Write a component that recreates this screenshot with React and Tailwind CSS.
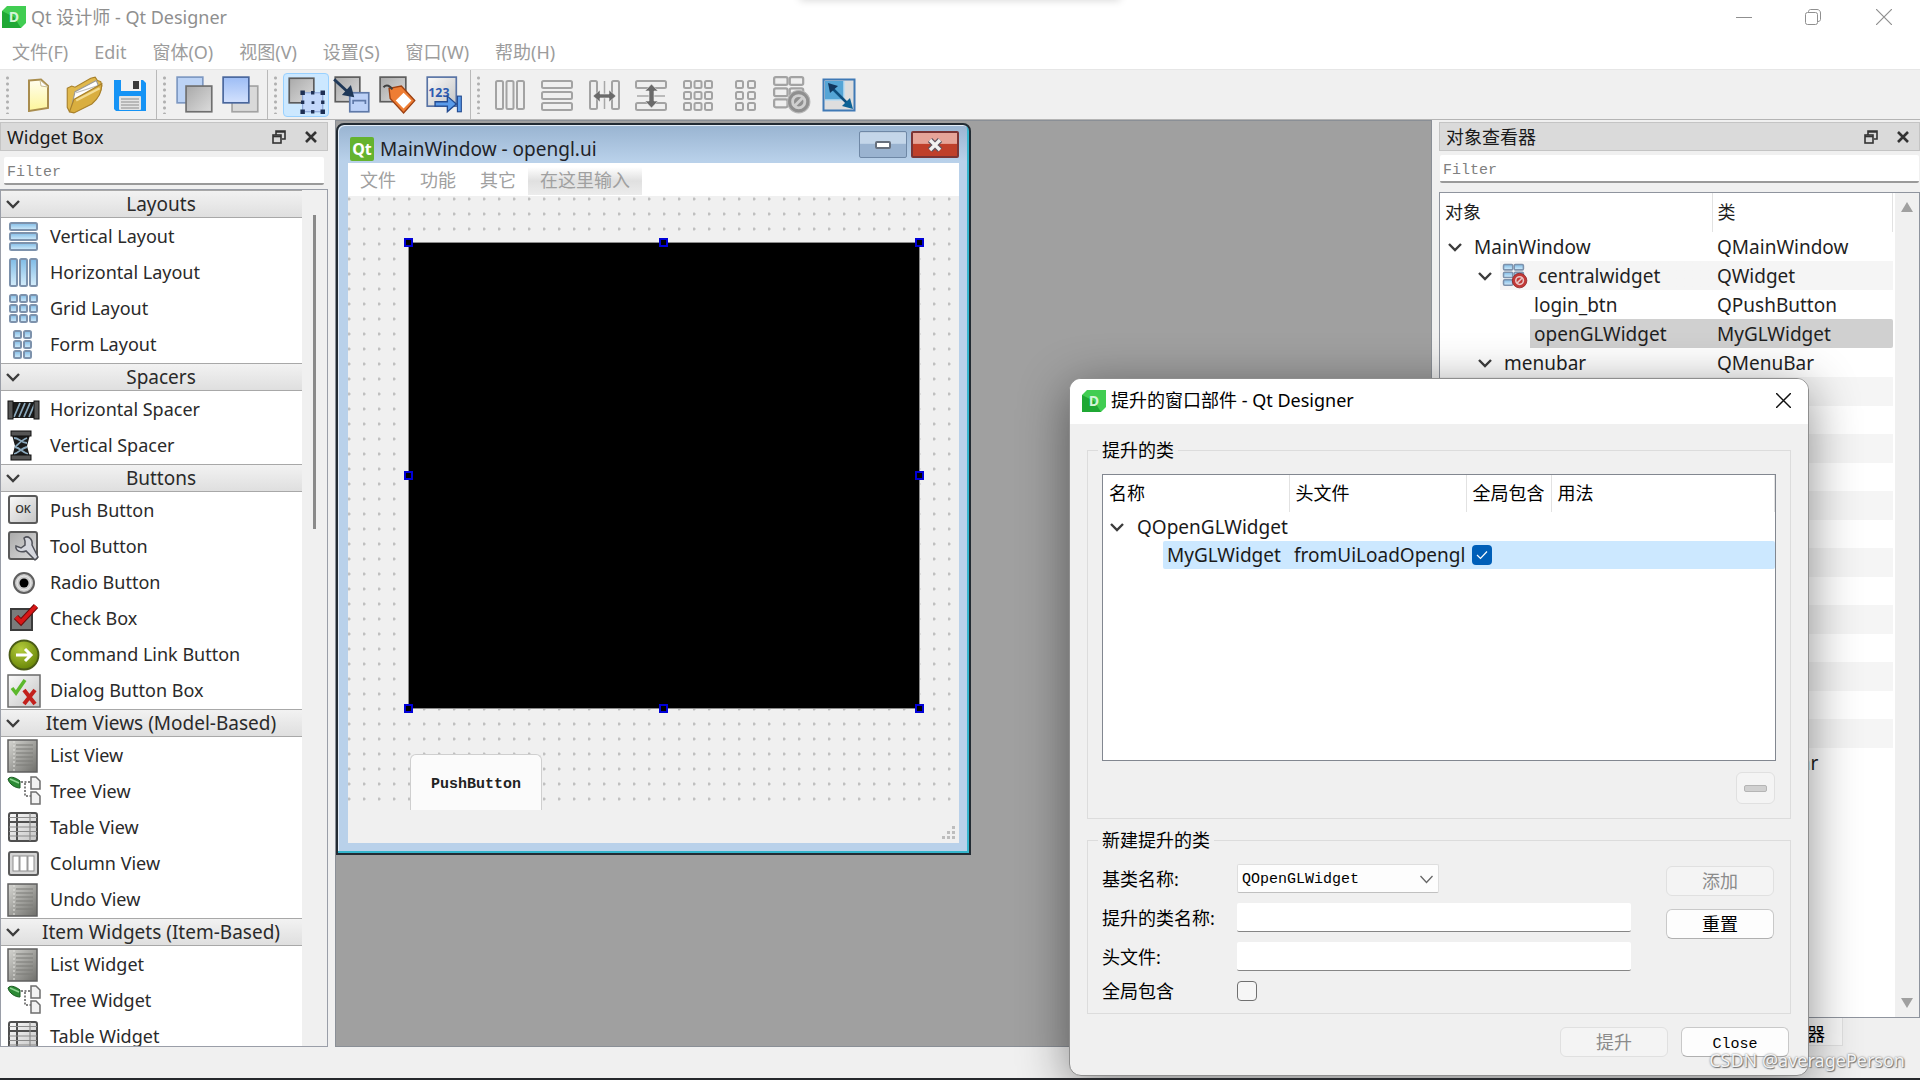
const MONO = "font-['Liberation_Mono','Noto_Sans_CJK_SC',monospace] text-[15px]";

/** Gradients shared by every icon on the page. */
function IconDefs() {
  return (
    <svg className="absolute" width="0" height="0" aria-hidden="true">
      <defs>
        <linearGradient id="gray" x1="0" y1="0" x2="1" y2="1">
          <stop offset="0" stopColor="#a9a9a9" />
          <stop offset="1" stopColor="#dcdcdc" />
        </linearGradient>
        <linearGradient id="light" x1="0" y1="0" x2="1" y2="1">
          <stop offset="0" stopColor="#fafafa" />
          <stop offset="1" stopColor="#c4c4c4" />
        </linearGradient>
        <linearGradient id="list" x1="0" y1="0" x2="1" y2="1">
          <stop offset="0" stopColor="#d6d6d2" />
          <stop offset="1" stopColor="#6e6e6a" />
        </linearGradient>
        <linearGradient id="blue" x1="0" y1="0" x2="0" y2="1">
          <stop offset="0" stopColor="#9dbdf5" />
          <stop offset="1" stopColor="#d3e1fd" />
        </linearGradient>
        <linearGradient id="sky" x1="0" y1="0" x2="0" y2="1">
          <stop offset="0" stopColor="#7fbbe6" />
          <stop offset="1" stopColor="#d5edfb" />
        </linearGradient>
        <linearGradient id="gold" x1="0" y1="0" x2="0" y2="1">
          <stop offset="0" stopColor="#fffef0" />
          <stop offset="1" stopColor="#fdf59a" />
        </linearGradient>
        <radialGradient id="green" cx="0.4" cy="0.3" r="0.8">
          <stop offset="0" stopColor="#b4cc3c" />
          <stop offset="1" stopColor="#5f7d00" />
        </radialGradient>
      </defs>
    </svg>
  );
}

function Icon({ size = 34, children }) {
  return (
    <svg width={size} height={size} viewBox="0 0 34 34" fill="none" aria-hidden="true" className="shrink-0">
      {children}
    </svg>
  );
}

function Cells({ xs, ys, w, h, fill, stroke }) {
  return ys.flatMap((y) =>
    xs.map((x) => (
      <rect key={`${x}-${y}`} x={x} y={y} width={w} height={h} rx="1.5" fill={fill} stroke={stroke} strokeWidth="2" />
    ))
  );
}

const GRAY = { fill: "#efefef", stroke: "#a3a3a3" };
const SKY = { fill: "url(#sky)", stroke: "#7d92ac" };

const toolIcons = {
  new: (
    <Icon>
      <path d="M8 2.500L20 1.500L27 8V30L8 33Z" fill="url(#gold)" stroke="#a98d4e" strokeWidth="2" />
      <path d="M19 2L20 8L27 9Z" fill="#fff" stroke="#c9bd94" />
    </Icon>
  ),
  open: (
    <Icon size={38}>
      <path d="M2 11L6 9L9 10L23 2L27 1L29 4L32 5L33 9L8 32H4L2 28Z" fill="#e0b84c" stroke="#a8802a" />
      <path d="M6 27L9 14L28 4L30 9L10 27Z" fill="#fff" stroke="#9a9a9a" />
      <path d="M10 15L31 8" stroke="#bcbcbc" />
      <path d="M4 32L8 21L33 7C33 16 29 21 24 25L8 33Z" fill="#d9ae3f" stroke="#a8802a" />
      <path d="M10 22L31 11" stroke="#f3dc93" strokeWidth="2" />
    </Icon>
  ),
  save: (
    <Icon>
      <path d="M1 2H30L33 5V33H3L1 31Z" fill="#1593f5" />
      <rect x="8" y="2" width="20" height="11" fill="#f1f1f1" />
      <rect x="20" y="3" width="6" height="8" fill="#3a3a3a" />
      <rect x="6" y="18" width="22" height="14" rx="1" fill="#e4e4e4" />
      <path d="M8 21H26M8 24H26M8 27H26M8 30H26" stroke="#a9a9a9" strokeWidth="1.500" />
    </Icon>
  ),
  back: (
    <Icon size={38}>
      <rect x="1" y="1" width="23" height="23" fill="#bcd3f5" stroke="#7d98c2" strokeWidth="1.500" />
      <rect x="9" y="9" width="23" height="23" fill="url(#gray)" stroke="#6f6f6f" strokeWidth="1.500" />
    </Icon>
  ),
  front: (
    <Icon size={38}>
      <rect x="9" y="9" width="23" height="23" fill="#d9d9d9" stroke="#a3a3a3" strokeWidth="1.500" />
      <rect x="1" y="1" width="23" height="23" fill="url(#blue)" stroke="#49669c" strokeWidth="1.500" />
    </Icon>
  ),
  editWidgets: (
    <Icon size={38}>
      <rect x="2" y="2" width="22" height="22" fill="url(#gray)" stroke="#5c5c5c" strokeWidth="1.500" />
      <rect x="14" y="15" width="18" height="17" fill="#c3d8fb" stroke="#8aa4d6" />
      <path d="M12 13h4v4h-4zM21.500 13.500h3v3h-3zM30 13h4v4h-4zM12.500 22h3v3h-3zM30.500 22h3v3h-3zM12 30h4v4h-4zM21.500 30.500h3v3h-3zM30 30h4v4h-4zM22 22.500h2.500v2.500h-2.500z" fill="#1e3054" />
    </Icon>
  ),
  editSignals: (
    <Icon size={38}>
      <rect x="2" y="1" width="22" height="22" fill="url(#gray)" stroke="#5c5c5c" strokeWidth="1.500" />
      <rect x="15" y="15" width="17" height="17" fill="#bcd1f7" stroke="#5f79a8" strokeWidth="1.500" />
      <path d="M18 25V22H29V25" stroke="#5f79a8" strokeWidth="1.500" />
      <path d="M1 3L14 15" stroke="#1f3858" strokeWidth="2.500" />
      <path d="M19 19L8 17L16 8Z" fill="#1f3858" />
    </Icon>
  ),
  editBuddies: (
    <Icon size={38}>
      <rect x="1" y="1" width="23" height="22" fill="url(#gray)" stroke="#5c5c5c" strokeWidth="1.500" />
      <path d="M9 11L20 9L32 22L22 33L10 20Z" fill="#ee7d33" stroke="#9c3f10" strokeWidth="1.200" />
      <path d="M22 15L29 22L22 29L15 22Z" fill="#fff" />
      <path d="M4 10C7 7 10 9 12 12" stroke="#3f3f3f" strokeWidth="1.800" />
    </Icon>
  ),
  editTabs: (
    <Icon size={38}>
      <rect x="2" y="1" width="26" height="26" fill="url(#light)" stroke="#5873a5" strokeWidth="1.500" />
      <text x="3" y="19" fontSize="11" fontWeight="700" fill="#2c5ab0" className="font-['Open_Sans',sans-serif]">
        123
      </text>
      <path d="M9 23H20V18L28 25L20 32V27H9Z" fill="#5a9bea" stroke="#234a8f" strokeWidth="1.200" />
      <rect x="29" y="18" width="3.500" height="14" fill="#5a9bea" stroke="#234a8f" />
    </Icon>
  ),
  layH: <Icon><Cells xs={[3, 13.500, 24]} ys={[3]} w={7} h={28} {...GRAY} /></Icon>,
  layV: <Icon><Cells xs={[2]} ys={[3, 14, 25]} w={30} h={7} {...GRAY} /></Icon>,
  splitH: (
    <Icon>
      <Cells xs={[3, 25]} ys={[3]} w={7} h={28} {...GRAY} />
      <path d="M17.500 3V31" stroke="#a8a8a8" strokeWidth="1.500" />
      <path d="M6 18L13 12V16H22V12L29 18L22 24V20H13V24Z" fill="#6a6a6a" stroke="#efefef" strokeWidth="0.600" />
    </Icon>
  ),
  splitV: (
    <Icon>
      <Cells xs={[2]} ys={[3, 25]} w={30} h={7} {...GRAY} />
      <path d="M3 18H31" stroke="#a8a8a8" strokeWidth="1.500" />
      <path d="M17.500 6L24 13H20V23H24L17.500 30L11 23H15V13H11Z" fill="#6a6a6a" stroke="#efefef" strokeWidth="0.600" />
    </Icon>
  ),
  grid: <Icon><Cells xs={[3, 13.500, 24]} ys={[3, 14, 25]} w={7} h={7} {...GRAY} /></Icon>,
  form: <Icon><Cells xs={[8, 20]} ys={[3, 14, 25]} w={7} h={7} {...GRAY} /></Icon>,
  breakLayout: (
    <Icon size={38}>
      <Cells xs={[1, 15]} ys={[1, 11, 21]} w={12} h={7} {...GRAY} />
      <circle cx="23" cy="23" r="10" fill="#8f8f8f" stroke="#b5b5b5" />
      <circle cx="23" cy="23" r="5.500" stroke="#cfcfcf" strokeWidth="2.500" />
      <path d="M19 27L27 19" stroke="#cfcfcf" strokeWidth="2.500" />
    </Icon>
  ),
  adjust: (
    <Icon>
      <rect x="1.500" y="1.500" width="31" height="31" fill="#dedede" stroke="#3f79b5" strokeWidth="2" />
      <rect x="3" y="3" width="19" height="19" fill="#55a5d6" />
      <path d="M22 3V22H3" stroke="#b9dcf2" strokeWidth="1.500" />
      <path d="M10 10L26 26" stroke="#0f4f7e" strokeWidth="2.500" />
      <path d="M6 5L16 8L8 15Z" fill="#12365e" />
      <path d="M31 31L20 28L28 20Z" fill="#0d6396" />
    </Icon>
  ),
};

const listIcon = (
  <Icon>
    <rect x="1" y="1" width="29" height="32" fill="url(#list)" stroke="#5f5f5f" strokeWidth="1.500" />
    <path d="M7 2V32" stroke="#e4e4e0" strokeWidth="1" strokeDasharray="2 2" />
    <path d="M9 6H26M9 10H26M9 14H26M9 18H26M9 22H26M9 26H26" stroke="#7d7d79" strokeWidth="1.200" />
  </Icon>
);

const treeIcon = (
  <Icon>
    <path d="M1 4C3 1 8 2 13 6V13C8 13 2 9 1 4Z" fill="#2c8a35" stroke="#1b5a22" />
    <path d="M3 4L12 8" stroke="#90d493" strokeWidth="1.500" />
    <path d="M14 7H24M18 8V21H24" stroke="#5a5a5a" strokeWidth="1.500" strokeDasharray="2 1.500" />
    <path d="M24 2H29L33 6V14H24Z" fill="#f2f2f2" stroke="#6e6e6e" strokeWidth="1.500" />
    <path d="M24 17H29L33 21V29H24Z" fill="#f2f2f2" stroke="#6e6e6e" strokeWidth="1.500" />
  </Icon>
);

const tableIcon = (
  <Icon>
    <rect x="2" y="2" width="28" height="28" rx="2" fill="url(#light)" stroke="#4f4f4f" strokeWidth="2" />
    <path d="M10 2V30M2 11H30" stroke="#4f4f4f" strokeWidth="2" />
    <path d="M23 2V30M2 6.500H30M2 16H30M2 20.500H30M2 25H30" stroke="#8a8a8a" strokeWidth="1.200" />
  </Icon>
);

const widgetGroups = [
  {
    title: "Layouts",
    items: [
      ["Vertical Layout", <Icon><Cells xs={[3]} ys={[3, 13, 23]} w={27} h={7} {...SKY} /></Icon>],
      ["Horizontal Layout", <Icon><Cells xs={[3, 13, 23]} ys={[3]} w={7} h={27} {...SKY} /></Icon>],
      ["Grid Layout", <Icon><Cells xs={[3, 13, 23]} ys={[3, 13, 23]} w={7} h={7} {...SKY} /></Icon>],
      ["Form Layout", <Icon><Cells xs={[7, 17]} ys={[3, 13, 23]} w={7} h={7} {...SKY} /></Icon>],
    ],
  },
  {
    title: "Spacers",
    items: [
      [
        "Horizontal Spacer",
        <Icon>
          <rect x="6" y="9" width="22" height="16" fill="#1b1b1b" />
          <path d="M7 24L13 10M12 24L18 10M17 24L23 10M22 24L28 10" stroke="#8ba9bd" strokeWidth="1.800" />
          <rect x="1" y="8" width="5" height="18" fill="#555" stroke="#111" />
          <rect x="27" y="8" width="5" height="18" fill="#555" stroke="#111" />
        </Icon>,
      ],
      [
        "Vertical Spacer",
        <Icon>
          <path d="M5 6H23L20 17L23 28H5L8 17Z" fill="#1b1b1b" />
          <path d="M7 9C12 9 14 14 20 14M20 9C14 11 10 17 8 18M8 18C13 19 15 23 21 25M20 18C15 19 11 24 7 25" stroke="#8ba9bd" strokeWidth="1.800" />
          <rect x="4" y="2" width="20" height="5" fill="#555" stroke="#111" />
          <rect x="4" y="26" width="20" height="5" fill="#555" stroke="#111" />
        </Icon>,
      ],
    ],
  },
  {
    title: "Buttons",
    items: [
      [
        "Push Button",
        <Icon>
          <rect x="2" y="2" width="28" height="27" rx="2" fill="url(#light)" stroke="#5a5a5a" strokeWidth="2" />
          <text x="16" y="19" fontSize="11" fontWeight="600" textAnchor="middle" fill="#333" className="font-['Open_Sans',sans-serif]">
            OK
          </text>
        </Icon>,
      ],
      [
        "Tool Button",
        <Icon>
          <rect x="2" y="2" width="28" height="27" rx="2" fill="url(#gray)" stroke="#5a5a5a" strokeWidth="2" />
          <path d="M17 8C21 5 26 9 25 15L31 27L28 30L19 21C14 23 8 21 9 16L14 18L18 15V11Z" fill="#d5d7de" stroke="#50525a" strokeWidth="1.500" />
        </Icon>,
      ],
      [
        "Radio Button",
        <Icon>
          <circle cx="17" cy="17" r="10" fill="#c9c9c9" stroke="#5f5f5f" strokeWidth="2" />
          <circle cx="17" cy="17" r="7" stroke="#ececec" />
          <circle cx="17" cy="17" r="4.500" fill="#000" />
        </Icon>,
      ],
      [
        "Check Box",
        <Icon>
          <rect x="4" y="7" width="21" height="21" fill="#7a7a7a" stroke="#3b3b3b" strokeWidth="2" />
          <path d="M9 15L14 20L29 4" stroke="#6c0c0c" strokeWidth="6" />
          <path d="M9 15L14 20L29 4" stroke="#d81616" strokeWidth="4" />
        </Icon>,
      ],
      [
        "Command Link Button",
        <Icon>
          <circle cx="17" cy="17" r="14.500" fill="url(#green)" stroke="#4b5c17" strokeWidth="1.800" />
          <path d="M9 17H23M18 11L24 17L18 23" stroke="#fff" strokeWidth="3" />
        </Icon>,
      ],
      [
        "Dialog Button Box",
        <Icon>
          <rect x="1" y="1" width="32" height="32" fill="url(#light)" stroke="#6a6a6a" strokeWidth="1.500" />
          <path d="M5 14L9 19L18 6" stroke="#5cb82c" strokeWidth="3.500" />
          <path d="M17 16L28 30M28 16L17 30" stroke="#c2201c" strokeWidth="4" />
        </Icon>,
      ],
    ],
  },
  {
    title: "Item Views (Model-Based)",
    items: [
      ["List View", listIcon],
      ["Tree View", treeIcon],
      ["Table View", tableIcon],
      [
        "Column View",
        <Icon>
          <rect x="2" y="5" width="29" height="23" rx="2" fill="#d4d4d4" stroke="#5a5a5a" strokeWidth="2" />
          <rect x="6" y="9" width="21" height="15" fill="#fff" stroke="#8d8d8d" />
          <path d="M12.500 9V24M20.500 9V24" stroke="#9a9a9a" strokeWidth="2" />
        </Icon>,
      ],
      ["Undo View", listIcon],
    ],
  },
  {
    title: "Item Widgets (Item-Based)",
    items: [
      ["List Widget", listIcon],
      ["Tree Widget", treeIcon],
      ["Table Widget", tableIcon],
    ],
  },
];

const toolGroups = [
  ["new", "open", "save"],
  ["back", "front"],
  ["editWidgets", "editSignals", "editBuddies", "editTabs"],
  ["layH", "layV", "splitH", "splitV", "grid", "form", "breakLayout", "adjust"],
];

const menus = ["文件(F)", "Edit", "窗体(O)", "视图(V)", "设置(S)", "窗口(W)", "帮助(H)"];

function Chevron() {
  return (
    <svg width="14" height="10" viewBox="0 0 14 10" fill="none" className="shrink-0" aria-hidden="true">
      <path d="M1 2L7 8L13 2" stroke="#3c3c3c" strokeWidth="2.400" />
    </svg>
  );
}

function DesignerLogo() {
  return (
    <svg width="24" height="22" viewBox="0 0 24 22" className="shrink-0" aria-hidden="true">
      <path d="M5 0H24V17L19 22H0V5Z" fill="#41cd52" />
      <path d="M0 5L12 11L19 22H0Z" fill="#1fa834" />
      <text x="12" y="16" fontSize="14" fontWeight="700" textAnchor="middle" fill="#d5f5d8" className="font-['Open_Sans',sans-serif]">
        D
      </text>
    </svg>
  );
}

function TitleBar() {
  return (
    <header className="flex h-[34px] items-center justify-between pl-0.5">
      <div className="flex items-center gap-[5px] text-[#8f8f8f]">
        <DesignerLogo />
        <h1 className="text-[18px]">Qt 设计师 - Qt Designer</h1>
      </div>
      <div className="flex text-[#8f8f8f]">
        <button type="button" aria-label="Minimize" className="grid h-[34px] w-[69px] place-items-center">
          <svg width="16" height="16" viewBox="0 0 16 16"><path d="M0 8.500H16" stroke="currentColor" /></svg>
        </button>
        <button type="button" aria-label="Restore" className="grid h-[34px] w-[69px] place-items-center">
          <svg width="16" height="16" viewBox="0 0 16 16" fill="none" stroke="currentColor">
            <rect x="0.500" y="3.500" width="12" height="12" rx="2" />
            <path d="M3.500 3V2.500C3.500 1.500 4.500 0.500 5.500 0.500H12C14 0.500 15.500 2 15.500 4V10.500C15.500 11.500 14.500 12.500 13 12.500" />
          </svg>
        </button>
        <button type="button" aria-label="Close" className="grid h-[34px] w-[73px] place-items-center">
          <svg width="16" height="16" viewBox="0 0 16 16"><path d="M0 0L16 16M16 0L0 16" stroke="currentColor" strokeWidth="1.200" /></svg>
        </button>
      </div>
    </header>
  );
}

function Toolbar() {
  return (
    <div className="flex h-[51px] border-t border-b border-t-[#e6e6e6] border-b-[#b4b4b4] bg-[#f0f0f0]">
      {toolGroups.map((group, i) => (
        <div key={group[0]} className={`flex items-center pr-[3px] ${i < 3 ? "border-r border-[#b9b9b9]" : ""}`}>
          <div className="grid w-[15px] place-items-center">
            <span className="h-[39px] w-[3px] bg-[radial-gradient(circle,#b0b0b0_1px,transparent_2px)] bg-size-[3px_6px]" />
          </div>
          {group.map((name) => (
            <button
              key={name}
              type="button"
              aria-label={name}
              className={`grid h-[44px] place-items-center rounded ${i < 3 ? "w-[46px]" : "w-[47px]"} ${
                name === "editWidgets" ? "border border-[#99d1ff] bg-[#cce8ff]" : ""
              }`}
            >
              {toolIcons[name]}
            </button>
          ))}
        </div>
      ))}
    </div>
  );
}

function DockHeader({ title }) {
  return (
    <div className="flex h-[29px] items-center justify-between border border-[#c4c4c4] bg-[#dadada] pt-px pr-[9px] pl-1.5 text-[#1a1a1a]">
      <h2 className="text-[18px]">{title}</h2>
      <div className="flex gap-[18px]">
        <button type="button" aria-label="Float">
          <svg width="14" height="14" viewBox="0 0 14 14" fill="none" stroke="#333" strokeWidth="1.600">
            <path d="M4 5V1H13V9H10M4 2H13" />
            <rect x="1" y="5" width="8" height="8" />
            <path d="M1 6.500H9" />
          </svg>
        </button>
        <button type="button" aria-label="Close panel">
          <svg width="14" height="14" viewBox="0 0 14 14"><path d="M2 2L12 12M12 2L2 12" stroke="#333" strokeWidth="2.600" /></svg>
        </button>
      </div>
    </div>
  );
}

function Filter({ label }) {
  return (
    <input
      type="text"
      aria-label={label}
      placeholder="Filter"
      className={`h-[28px] w-full rounded-xs border-b-2 border-[#9a9a9a] bg-white px-[3px] pt-1 placeholder:text-[#808080] ${MONO}`}
    />
  );
}

function WidgetBox() {
  return (
    <aside className="flex w-[328px] shrink-0 flex-col pt-0.5">
      <DockHeader title="Widget Box" />
      <div className="pt-1.5 pr-1 pb-1 pl-1">
        <Filter label="Filter widgets" />
      </div>
      <div className="flex min-h-0 flex-1 border border-[#9a9ea8] bg-white">
        <div className="min-w-0 flex-1 overflow-hidden">
          {widgetGroups.map((group) => (
            <section key={group.title} className="pb-px">
              <h3 className="flex h-7 items-center border-y border-[#a8a8a8] bg-linear-to-b from-[#f2f2f2] to-[#dfdfdf] pl-[5px] text-[19px] text-[#2a2a2a]">
                <Chevron />
                <span className="flex-1 text-center">{group.title}</span>
              </h3>
              <ul>
                {group.items.map(([label, icon]) => (
                  <li key={label} className="flex h-9 items-center gap-[9px] pt-px pl-1.5 text-[18px] text-[#2a2a2a]">
                    {icon}
                    {label}
                  </li>
                ))}
              </ul>
            </section>
          ))}
        </div>
        <div className="w-[25px] bg-[#f0f0f0] pt-[25px] pl-[11px]">
          <div className="h-[314px] w-[3px] bg-[#8a8a8a]" />
        </div>
      </div>
    </aside>
  );
}

const handles = [
  "-left-[5px] -top-[5px]",
  "left-[250px] -top-[5px]",
  "-right-[5px] -top-[5px]",
  "-left-[5px] top-[228px]",
  "-right-[5px] top-[228px]",
  "-left-[5px] -bottom-[5px]",
  "left-[250px] -bottom-[5px]",
  "-right-[5px] -bottom-[5px]",
];

/** The form being edited, shown as a child window of the work area. */
function FormWindow() {
  return (
    <div className="absolute top-0.5 left-0 flex h-[732px] w-[635px] flex-col rounded-t-lg border-2 border-[#222b33] bg-linear-to-b from-[#99b4d1] via-[#b9d1ea] via-5% to-[#b9d1ea] px-2.5 pb-2.5 shadow-[inset_-2px_-2px_0_#35b5cc,inset_1px_1px_0_#e3edf8]">
      <div className="flex h-[38px] items-start justify-between">
        <div className="flex items-center gap-1.5 pt-3 pl-0.5">
          <span className="grid h-6 w-6 place-items-center rounded-xs bg-[#65b32e] text-[16px] font-bold text-white">Qt</span>
          <span className="text-[19px] leading-6 text-[#1f2328]">MainWindow - opengl.ui</span>
        </div>
        <div className="flex gap-1 pt-1.5">
          <button type="button" aria-label="Minimize form" className="grid h-[27px] w-12 place-items-center rounded-xs border border-[#6f88a6] bg-linear-to-b from-[#c4d6e9] from-45% to-[#9ab3d0] to-50% inset-shadow-2xs">
            <span className="h-2 w-4 rounded-xs border-2 border-[#666f7c] bg-white" />
          </button>
          <button type="button" aria-label="Close form" className="grid h-[27px] w-12 place-items-center rounded-xs border-2 border-[#7b3434] bg-linear-to-b from-[#e6a498] from-45% to-[#bf3f2a] to-50%">
            <svg width="18" height="16" viewBox="0 0 18 16">
              <path d="M4 3L14 13M14 3L4 13" stroke="#5d5560" strokeWidth="6" />
              <path d="M4 3L14 13M14 3L4 13" stroke="#f2f2f2" strokeWidth="3.400" />
            </svg>
          </button>
        </div>
      </div>
      <nav className="flex h-[33px] items-center bg-white pt-0.5 text-[18px] text-[#a0a0a0]">
        {["文件", "功能", "其它"].map((m) => (
          <button key={m} type="button" className="px-3">{m}</button>
        ))}
        <button type="button" className="h-7 bg-linear-to-b from-white via-[#e0e0e0] to-[#ececec] px-3">在这里输入</button>
      </nav>
      <div className="relative flex-1 bg-[#f0f0f0]">
        <div className="h-[606px] bg-[radial-gradient(circle_at_1px_3px,#c0c0c0_1px,transparent_2px)] bg-size-[15px_15px]" />
        <div className="absolute top-[46px] left-[60px] h-[467px] w-[512px] border border-[#8c8c8c] bg-black">
          {handles.map((h) => (
            <span key={h} className={`absolute size-[9px] border-2 border-[#0000d8] bg-black ${h}`} />
          ))}
        </div>
        <button type="button" className={`absolute top-[558px] left-[62px] h-[56px] w-[132px] rounded-t-md border border-b-0 border-[#cfcfcf] bg-[#fbfbfb] pt-1.5 font-bold text-[#222] ${MONO}`}>
          PushButton
        </button>
        <svg className="absolute right-1 bottom-1" width="13" height="13" fill="#bdbdbd" aria-hidden="true">
          <path d="M10 0h3v3h-3zM5 5h3v3h-3zM10 5h3v3h-3zM0 10h3v3h-3zM5 10h3v3h-3zM10 10h3v3h-3z" />
        </svg>
      </div>
    </div>
  );
}

const objects = [
  { name: "MainWindow", cls: "QMainWindow", indent: "pl-2", open: true, gap: "gap-3" },
  { name: "centralwidget", cls: "QWidget", indent: "pl-[38px]", open: true, icon: true, gap: "gap-[10px]" },
  { name: "login_btn", cls: "QPushButton", indent: "pl-[94px]" },
  { name: "openGLWidget", cls: "MyGLWidget", indent: "pl-[94px]", selected: true },
  { name: "menubar", cls: "QMenuBar", indent: "pl-[38px]", open: true, gap: "gap-3" },
];
const fillerRows = Array.from({ length: 13 }, (_, i) => i);

function ObjectInspector() {
  return (
    <aside className="flex w-[481px] shrink-0 flex-col pt-0.5">
      <DockHeader title="对象查看器" />
      <div className="px-px pt-1 pb-[9px]">
        <Filter label="Filter objects" />
      </div>
      <div className="flex min-h-0 flex-1 border border-[#8f949e] bg-white">
        <div className="min-w-0 flex-1 overflow-hidden pr-0.5">
          <table className="w-full table-fixed border-collapse text-left text-[18px] text-[#1f1f1f]">
            <thead>
              <tr className="h-[39px]">
                <th className="w-[272px] border-r border-[#e2e2e2] pl-[5px] font-normal">对象</th>
                <th className="border-r border-[#e2e2e2] pl-[5px] font-normal">类</th>
              </tr>
            </thead>
            <tbody className="text-[19px] leading-7">
              {objects.map((o) => (
                <tr key={o.name} className="h-[29px]">
                  <td className="p-0">
                    <div
                      className={`flex h-[29px] items-center ${o.indent} ${o.gap ?? ""} ${
                        o.selected ? "bg-linear-to-r from-transparent from-[90px] to-[#d0d0d0] to-[90px]" : ""
                      } ${o.icon ? "bg-linear-to-r from-transparent from-[60px] to-[#f5f5f5] to-[60px]" : ""}`}
                    >
                      {o.open && <Chevron />}
                      {o.icon && (
                        <Icon size={26}>
                          <Cells xs={[2, 16]} ys={[2, 12, 22]} w={12} h={7} {...SKY} />
                          <circle cx="23" cy="23" r="9.500" fill="#c23a38" stroke="#8b2020" />
                          <circle cx="23" cy="23" r="5" stroke="#e9c8c8" strokeWidth="2" />
                          <path d="M20 26L26 20" stroke="#e9c8c8" strokeWidth="2" />
                        </Icon>
                      )}
                      {o.name}
                    </div>
                  </td>
                  <td className={`p-0 pl-[5px] ${o.selected ? "rounded-r-xs bg-[#d0d0d0]" : ""} ${o.icon ? "bg-[#f5f5f5]" : ""}`}>{o.cls}</td>
                </tr>
              ))}
              {fillerRows.map((i) => (
                <tr key={i} className={i % 2 === 0 ? "h-[29px] bg-[#f5f5f5]" : "h-7"}>
                  <td />
                  <td />
                </tr>
              ))}
              <tr className="h-[29px]">
                <td />
                <td className="p-0 pl-[5px]">QStatusBar</td>
              </tr>
            </tbody>
          </table>
        </div>
        <div className="flex w-6 flex-col items-center justify-between bg-[#f0f0f0] py-[9px] text-[#a0a0a0]">
          <svg width="12" height="10" fill="currentColor"><path d="M6 0L12 10H0Z" /></svg>
          <svg width="12" height="10" fill="currentColor"><path d="M6 10L12 0H0Z" /></svg>
        </div>
      </div>
      <div className="flex h-[29px] items-start pl-[300px]">
        <button type="button" className="h-7 w-[104px] border border-t-0 border-[#e0e0e0] bg-[#f7f7f7] pt-1 pr-[17px] text-right text-[18px] leading-6 whitespace-nowrap">
          浏览器
        </button>
      </div>
    </aside>
  );
}

function DialogButton({ children, disabled }) {
  return (
    <button
      type="button"
      disabled={disabled}
      className={`h-[30px] w-[108px] rounded-md border ${
        disabled ? "border-[#e0e0e0] bg-[#f4f4f4] text-[#8b8b8b]" : "border-[#c9c9c9] border-b-[#b0b0b0] bg-[#fdfdfd] text-black"
      }`}
    >
      {children}
    </button>
  );
}

function GroupBox({ title, className, children }) {
  return (
    <fieldset className={`border border-[#dcdcdc] px-[14px] ${className}`}>
      <legend className="-ml-1 h-6 px-1 text-[18px] leading-6">{title}</legend>
      {children}
    </fieldset>
  );
}

function PromotedDialog() {
  return (
    <div
      role="dialog"
      aria-label="提升的窗口部件"
      className="absolute top-[378px] left-[1069px] w-[740px] overflow-hidden rounded-xl border border-[#8e8e8e] bg-[#f0f0f0] text-[18px] text-black shadow-[0_10px_50px_rgba(0,0,0,0.45)]"
    >
      <div className="flex h-[45px] items-center justify-between bg-white pr-[17px] pb-0.5 pl-3">
        <div className="flex items-center gap-[5px]">
          <DesignerLogo />
          <h2>提升的窗口部件 - Qt Designer</h2>
        </div>
        <button type="button" aria-label="Close dialog">
          <svg width="15" height="15" viewBox="0 0 15 15"><path d="M0 0L15 15M15 0L0 15" stroke="#111" strokeWidth="1.500" /></svg>
        </button>
      </div>

      <div className="px-[17px] pt-[14px] pb-[18px]">
        <GroupBox title="提升的类" className="pb-[14px]">
          <div className="mt-3 h-[287px] border border-[#828790] bg-white">
            <table className="w-full table-fixed border-collapse text-left">
              <thead>
                <tr className="h-[37px]">
                  <th className="w-[186px] border-r border-[#e2e2e2] pl-1.5 font-normal">名称</th>
                  <th className="w-[177px] border-r border-[#e2e2e2] pl-1.5 font-normal">头文件</th>
                  <th className="w-[85px] border-r border-[#e2e2e2] pl-1.5 font-normal whitespace-nowrap">全局包含</th>
                  <th className="border-r border-[#e2e2e2] pl-1.5 font-normal">用法</th>
                </tr>
              </thead>
              <tbody className="text-[19px] leading-7 text-[#1a1a1a]">
                <tr className="h-[29px]">
                  <td className="p-0" colSpan={4}>
                    <div className="flex h-7 items-center gap-[13px] pl-[7px]">
                      <Chevron />
                      QOpenGLWidget
                    </div>
                  </td>
                </tr>
                <tr className="h-7">
                  <td className="p-0 pl-[60px]">
                    <div className="h-7 rounded-l-xs bg-[#cce8ff] pl-1 leading-7">MyGLWidget</div>
                  </td>
                  <td className="bg-[#cce8ff] p-0 pl-[5px]">fromUiLoadOpengl</td>
                  <td className="bg-[#cce8ff] p-0 pl-1.5">
                    <div className="grid w-5 place-items-center">
                      <input type="checkbox" defaultChecked aria-label="全局包含 MyGLWidget" className="size-5 appearance-none rounded bg-[#005fb8] [grid-area:1/1]" />
                      <svg width="12" height="10" viewBox="0 0 12 10" fill="none" className="pointer-events-none [grid-area:1/1]">
                        <path d="M1 5L4.500 8.500L11 1.500" stroke="#fff" strokeWidth="1.200" />
                      </svg>
                    </div>
                  </td>
                  <td className="rounded-r-xs bg-[#cce8ff]" />
                </tr>
              </tbody>
            </table>
          </div>
          <div className="mt-[11px] flex justify-end pr-px">
            <button type="button" disabled aria-label="Remove" className="grid h-8 w-[39px] place-items-center rounded-md border border-[#e0e0e0] bg-[#f4f4f4]">
              <span className="h-[7px] w-[23px] rounded-xs border border-[#b5b5b5] bg-[#d0d0d0]" />
            </button>
          </div>
        </GroupBox>

        <GroupBox title="新建提升的类" className="mt-[9px] pb-3">
          <div className="mt-3 flex justify-between pr-0.5">
            <div className="grid grid-cols-[135px_394px] items-center gap-y-[10px]">
              <label htmlFor="base" className="h-7 leading-7">基类名称:</label>
              <div className="relative w-[202px]">
                <select id="base" className={`block h-[29px] w-full appearance-none rounded-xs border border-[#dedede] border-b-[#c0c0c0] bg-[#fdfdfd] pt-1 pl-1 ${MONO}`}>
                  <option>QOpenGLWidget</option>
                </select>
                <svg className="pointer-events-none absolute top-[11px] right-1.5" width="13" height="9" viewBox="0 0 13 9" fill="none">
                  <path d="M0.500 1L6.500 7.500L12.500 1" stroke="#666" strokeWidth="1.300" />
                </svg>
              </div>
              <label htmlFor="cls" className="h-7 leading-7">提升的类名称:</label>
              <input id="cls" type="text" className="h-[29px] w-full rounded-xs border-b border-[#868686] bg-white px-1" />
              <label htmlFor="hdr" className="h-7 leading-7">头文件:</label>
              <input id="hdr" type="text" className="h-[29px] w-full rounded-xs border-b border-[#868686] bg-white px-1" />
              <label htmlFor="glob" className="h-5 leading-5">全局包含</label>
              <input id="glob" type="checkbox" className="size-5 appearance-none rounded border border-[#707070] bg-[#f6f6f6]" />
            </div>
            <div className="flex flex-col gap-[13px] pt-0.5">
              <DialogButton disabled>添加</DialogButton>
              <DialogButton>重置</DialogButton>
            </div>
          </div>
        </GroupBox>

        <div className="mt-[13px] flex justify-end gap-[13px] pr-0.5">
          <DialogButton disabled>提升</DialogButton>
          <DialogButton>
            <span className={MONO}>Close</span>
          </DialogButton>
        </div>
      </div>
    </div>
  );
}

export default function App() {
  return (
    <div className="relative flex h-screen w-full flex-col overflow-hidden border-b-2 border-[#26282c] bg-white font-['Noto_Sans','Noto_Sans_CJK_SC',sans-serif]">
      <IconDefs />
      <div className="absolute -top-2 left-[800px] h-2 w-[320px] shadow-[0_0_8px_rgba(0,0,0,0.18)]" />
      <TitleBar />
      <nav className="flex h-[35px] items-center gap-0.5 pt-0.5 text-[18px] text-[#9c9c9c]">
        {menus.map((m) => (
          <button key={m} type="button" className="px-3">{m}</button>
        ))}
      </nav>
      <Toolbar />
      <div className="flex min-h-0 flex-1 bg-[#f0f0f0]">
        <div className="mb-[31px] flex">
          <WidgetBox />
        </div>
        <main className="relative mb-[31px] ml-[7px] min-w-0 flex-1 overflow-hidden border border-[#8a8f96] bg-[#a0a0a0]">
          <FormWindow />
        </main>
        <div className="mb-[31px] ml-[7px] flex">
          <ObjectInspector />
        </div>
      </div>
      <PromotedDialog />
      <p className="absolute right-[15px] bottom-1 text-[18px] text-white/90 [text-shadow:0_0_2px_#666,1px_1px_1px_#777]">CSDN @averagePerson</p>
    </div>
  );
}
